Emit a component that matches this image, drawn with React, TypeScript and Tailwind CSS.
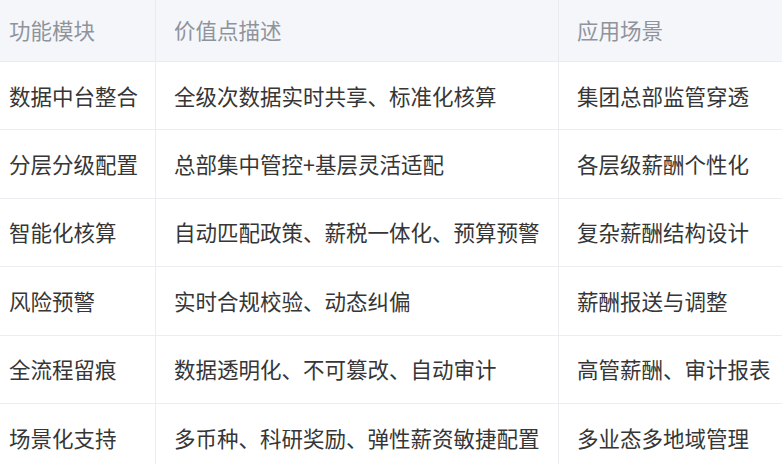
import React from "react";

const rows: [string, string, string][] = [
  ["数据中台整合", "全级次数据实时共享、标准化核算", "集团总部监管穿透"],
  ["分层分级配置", "总部集中管控+基层灵活适配", "各层级薪酬个性化"],
  ["智能化核算", "自动匹配政策、薪税一体化、预算预警", "复杂薪酬结构设计"],
  ["风险预警", "实时合规校验、动态纠偏", "薪酬报送与调整"],
  ["全流程留痕", "数据透明化、不可篡改、自动审计", "高管薪酬、审计报表"],
  ["场景化支持", "多币种、科研奖励、弹性薪资敏捷配置", "多业态多地域管理"],
];

export default function App() {
  return (
    <div
      className="w-[782px] h-[464px] overflow-hidden bg-white text-[21.5px]"
      style={{ fontFamily: '"Noto Sans CJK SC", "Noto Sans", sans-serif' }}
    >
      <div className="grid grid-cols-[156px_403px_1fr]">
        <div className="h-[62px] flex items-center pl-[9px] bg-[#f5f6fa] text-[#8f949c] border-r border-b border-[#e9ebef]">
          功能模块
        </div>
        <div className="h-[62px] flex items-center pl-[18px] bg-[#f5f6fa] text-[#8f949c] border-r border-b border-[#e9ebef]">
          价值点描述
        </div>
        <div className="h-[62px] flex items-center pl-[18px] bg-[#f5f6fa] text-[#8f949c] border-b border-[#e9ebef]">
          应用场景
        </div>
        {rows.map((r, i) => (
          <React.Fragment key={i}>
            <div className="h-[68.4px] flex items-center pl-[9px] text-[#363636] border-r border-b border-[#ebedf0] whitespace-nowrap">
              {r[0]}
            </div>
            <div className="h-[68.4px] flex items-center pl-[18px] text-[#363636] border-r border-b border-[#ebedf0] whitespace-nowrap">
              {r[1]}
            </div>
            <div className="h-[68.4px] flex items-center pl-[18px] text-[#363636] border-b border-[#ebedf0] whitespace-nowrap">
              {r[2]}
            </div>
          </React.Fragment>
        ))}
      </div>
    </div>
  );
}
